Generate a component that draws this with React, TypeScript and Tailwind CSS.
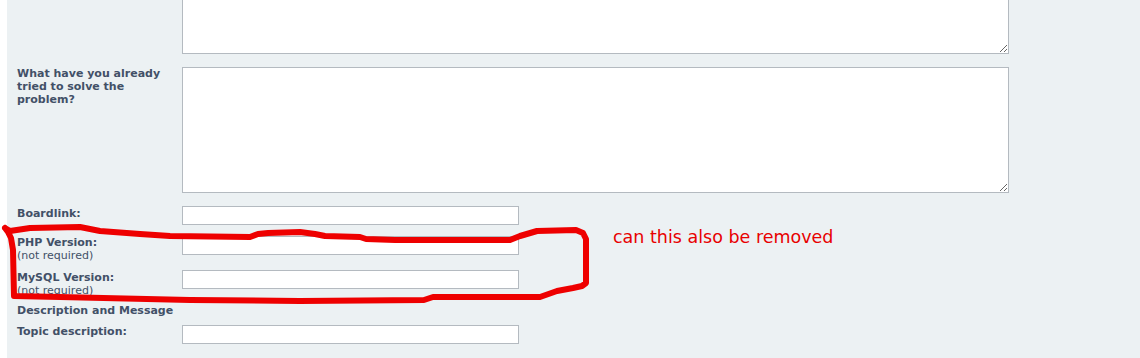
import React from "react";

const labelFont = { fontFamily: '"DejaVu Sans", Verdana, sans-serif' };

function Label({ children, sub }: { children: React.ReactNode; sub?: string }) {
  return (
    <div className="w-[165px] shrink-0 pr-[15px] text-[11px] leading-[13px] text-[#425067]" style={labelFont}>
      <div className="font-bold">{children}</div>
      {sub && <div className="font-normal">{sub}</div>}
    </div>
  );
}

function Input() {
  return <input type="text" className="h-[19px] w-[337px] border border-[#b4bac0] bg-white outline-none" />;
}

export default function App() {
  const loop =
    "M5,228 L10,231 L30,228 L80,227 L100,231 L140,234 L170,236 L250,237 L258,234 L268,233 L300,232 L315,234 L325,236 L360,237 L366,239 L395,240 L510,240 L520,236 L537,231 L576,230 L583,233 L586,239 L586,283 L582,286 L573,288 L557,291 L540,297 L483,297 L433,297 L424,300 L300,301 L190,300 L60,297 L14,296 L13,250 L11,238 L8,232 L5,228";
  return (
    <div className="relative h-[358px] w-[1140px] overflow-hidden bg-white pl-[7px]">
      <div className="h-full bg-[#ecf1f3] pl-[10px]">
        <div className="flex">
          <Label>{""}</Label>
          <textarea className="h-[54px] w-[827px] border border-t-0 border-[#b4bac0] bg-white outline-none" />
        </div>
        <div className="mt-[13px] flex">
          <Label>What have you already tried to solve the problem?</Label>
          <textarea className="h-[126px] w-[827px] border border-[#b4bac0] bg-white outline-none" />
        </div>
        <div className="mt-[13px] flex">
          <div className="pt-[1px]">
            <Label>Boardlink:</Label>
          </div>
          <Input />
        </div>
        <div className="mt-[11px] flex h-[26px]">
          <Label sub="(not required)">PHP Version:</Label>
          <Input />
        </div>
        <div className="mt-[8px] flex h-[26px]">
          <div className="pt-[1px]">
            <Label sub="(not required)">MySQL Version:</Label>
          </div>
          <Input />
        </div>
        <div className="mt-[8px] h-[13px] text-[11px] font-bold leading-[13px] text-[#425067]" style={labelFont}>
          Description and Message
        </div>
        <div className="mt-[8px] flex">
          <Label>Topic description:</Label>
          <Input />
        </div>
      </div>
      <svg className="pointer-events-none absolute left-0 top-0" width="1140" height="358" viewBox="0 0 1140 358">
        <path d={loop} fill="none" stroke="#ee0000" strokeWidth="6" strokeLinejoin="round" strokeLinecap="round" />
      </svg>
      <div
        className="absolute left-[613px] top-[226px] text-[17.5px] leading-[22px] text-[#e80000]"
        style={{ fontFamily: '"DejaVu Sans", Verdana, sans-serif' }}
      >
        can this also be removed
      </div>
    </div>
  );
}
